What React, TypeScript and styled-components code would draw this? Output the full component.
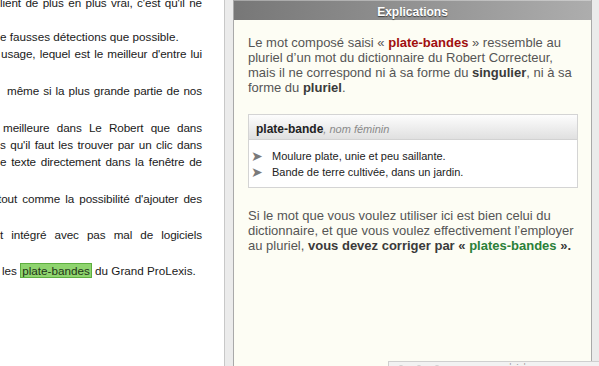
import styled, { createGlobalStyle } from "styled-components";

const GlobalStyle = createGlobalStyle`
  html, body {
    margin: 0;
    padding: 0;
    overflow: hidden;
    background: #ebebeb;
  }
  body {
    font-family: "Liberation Sans", Arial, Helvetica, sans-serif;
  }
`;

const docLines = [
  { text: "lient de plus en plus vrai, c'est qu'il ne", gap: -6, indent: 0, justify: true },
  { text: "", gap: 0, indent: 0, justify: false },
  { text: "e fausses détections que possible.", gap: 0, indent: 0, justify: false },
  { text: "usage, lequel est le meilleur d'entre lui", gap: 0, indent: 1, justify: true },
  { text: "même si la plus grande partie de nos", gap: 20, indent: 7, justify: true },
  { text: "meilleure dans Le Robert que dans", gap: 20, indent: 3, justify: true },
  { text: "s qu'il faut les trouver par un clic dans", gap: 0, indent: 0, justify: true },
  { text: "e texte directement dans la fenêtre de", gap: 0, indent: 0, justify: true },
  { text: "tout comme la possibilité d'ajouter des", gap: 20, indent: -2, justify: true },
  { text: "t intégré avec pas mal de logiciels", gap: 19, indent: 0, justify: true },
];

const definitions = [
  "Moulure plate, unie et peu saillante.",
  "Bande de terre cultivée, dans un jardin.",
];

const App = () => {
  return (
    <Screen>
      <GlobalStyle />
      <Document>
        {docLines.map((line, i) => (
          <DocLine key={i} $gap={line.gap} $indent={line.indent} $justify={line.justify}>
            {line.text || "\u00a0"}
          </DocLine>
        ))}
        <DocLine $gap={19} $indent={2} $justify={false}>
          les <Highlight>plate-bandes</Highlight> du Grand ProLexis.
        </DocLine>
      </Document>
      <Gutter />
      <Panel>
        <PanelHeader>Explications</PanelHeader>
        <PanelBody>
          <Paragraph>
            Le mot composé saisi « <Wrong>plate-bandes</Wrong> » ressemble au pluriel d’un mot du
            dictionnaire du Robert Correcteur, mais il ne correspond ni à sa forme du{" "}
            <Strong>singulier</Strong>, ni à sa forme du <Strong>pluriel</Strong>.
          </Paragraph>
          <DefinitionBox>
            <DefinitionHead>
              <Headword>plate-bande</Headword>
              <Category>, nom féminin</Category>
            </DefinitionHead>
            <DefinitionList>
              {definitions.map((d) => (
                <DefinitionItem key={d}>
                  <Bullet>➤</Bullet>
                  {d}
                </DefinitionItem>
              ))}
            </DefinitionList>
          </DefinitionBox>
          <Paragraph $gap={20}>
            Si le mot que vous voulez utiliser ici est bien celui du dictionnaire, et que vous
            voulez effectivement l’employer au pluriel,{" "}
            <Strong>
              vous devez corriger par « <Right>plates-bandes</Right> ».
            </Strong>
          </Paragraph>
        </PanelBody>
      </Panel>
      <Gutter $narrow />
      <WindowStrip>
        <svg width="60" height="12" viewBox="0 0 60 12">
          <circle cx="12" cy="9" r="5" fill="none" stroke="#a8a8a8" strokeWidth="1" />
          <circle cx="30" cy="9" r="5" fill="none" stroke="#a8a8a8" strokeWidth="1" />
          <circle cx="48" cy="9" r="5" fill="none" stroke="#a8a8a8" strokeWidth="1" />
        </svg>
        <StripMarks>-&nbsp;&nbsp;&nbsp;&nbsp;,&nbsp;&nbsp;'&nbsp;&nbsp;:&nbsp;&nbsp;'</StripMarks>
      </WindowStrip>
    </Screen>
  );
};

export default App;

const Screen = styled.div`
  position: relative;
  display: flex;
  width: 599px;
  height: 366px;
  overflow: hidden;
  background: #ebebeb;
`;

const Document = styled.div`
  box-sizing: border-box;
  width: 225px;
  flex-shrink: 0;
  padding-right: 22px;
  background: #fff;
  border-right: 1px solid #c8c8c8;
  overflow: hidden;
  font-size: 11.7px;
  line-height: 17px;
  color: #1a1a1a;
`;

const DocLine = styled.div<{ $gap: number; $indent: number; $justify: boolean }>`
  height: 17px;
  margin-top: ${(p) => p.$gap}px;
  padding-left: ${(p) => Math.max(p.$indent, 0)}px;
  margin-left: ${(p) => Math.min(p.$indent, 0)}px;
  white-space: ${(p) => (p.$justify ? "normal" : "nowrap")};
  letter-spacing: ${(p) => (p.$justify ? "-0.1px" : "0")};
  text-align: ${(p) => (p.$justify ? "justify" : "left")};
  text-align-last: ${(p) => (p.$justify ? "justify" : "left")};
`;

const Highlight = styled.span`
  padding: 0 1px;
  background: #8fd46f;
  border: 1px solid #5daf3f;
  color: #1f3518;
`;

const Gutter = styled.div<{ $narrow?: boolean }>`
  width: ${(p) => (p.$narrow ? 7 : 8)}px;
  flex-shrink: 0;
  background: #ebebeb;
`;

const Panel = styled.section`
  box-sizing: border-box;
  width: 359px;
  flex-shrink: 0;
  display: flex;
  flex-direction: column;
  background: #fdfdf4;
  border-left: 1px solid #a9a9a9;
  border-right: 1px solid #a9a9a9;
`;

const PanelHeader = styled.div`
  height: 16px;
  padding-top: 4px;
  line-height: 16px;
  text-align: center;
  font-size: 12px;
  font-weight: bold;
  color: #fff;
  text-shadow: 0 1px 1px rgba(0, 0, 0, 0.55);
  background: linear-gradient(to right, #777, #adadad);
  box-shadow: inset 0 1px 0 rgba(255, 255, 255, 0.35);
`;

const PanelBody = styled.div`
  padding: 15px 13px 0 14px;
  color: #555;
`;

const Paragraph = styled.p<{ $gap?: number }>`
  margin: ${(p) => p.$gap ?? 0}px 0 0;
  font-size: 13px;
  line-height: 15px;
`;

const Strong = styled.b`
  color: #3a3a3a;
`;

const Wrong = styled.b`
  color: #a00f0f;
`;

const Right = styled.span`
  color: #2a8038;
`;

const DefinitionBox = styled.div`
  margin-top: 19px;
  border: 1px solid #d4d4d4;
  background: #fff;
`;

const DefinitionHead = styled.div`
  height: 25px;
  box-sizing: border-box;
  padding: 5px 7px 0;
  background: linear-gradient(#fdfdfd, #e0e0e0);
  border-bottom: 1px solid #d2d2d2;
  line-height: 16px;
`;

const Headword = styled.b`
  font-size: 12px;
  color: #222;
`;

const Category = styled.i`
  font-size: 11px;
  color: #8a8a8a;
`;

const DefinitionList = styled.ul`
  list-style: none;
  margin: 0;
  padding: 8px 0 7px 1px;
  font-size: 11px;
  line-height: 16px;
  color: #222;
`;

const DefinitionItem = styled.li`
  display: flex;
  align-items: center;
`;

const Bullet = styled.span`
  width: 22px;
  padding-left: 1px;
  box-sizing: border-box;
  color: #7a7a7a;
  font-size: 14px;
  line-height: 16px;
`;

const WindowStrip = styled.div`
  position: absolute;
  left: 388px;
  top: 361px;
  right: 0;
  height: 20px;
  display: flex;
  align-items: flex-start;
  gap: 40px;
  background: #f2f2f2;
  border-top: 1px solid #cfcfcf;
  border-left: 1px solid #cfcfcf;
`;

const StripMarks = styled.span`
  font-size: 9px;
  line-height: 8px;
  color: #999;
`;
